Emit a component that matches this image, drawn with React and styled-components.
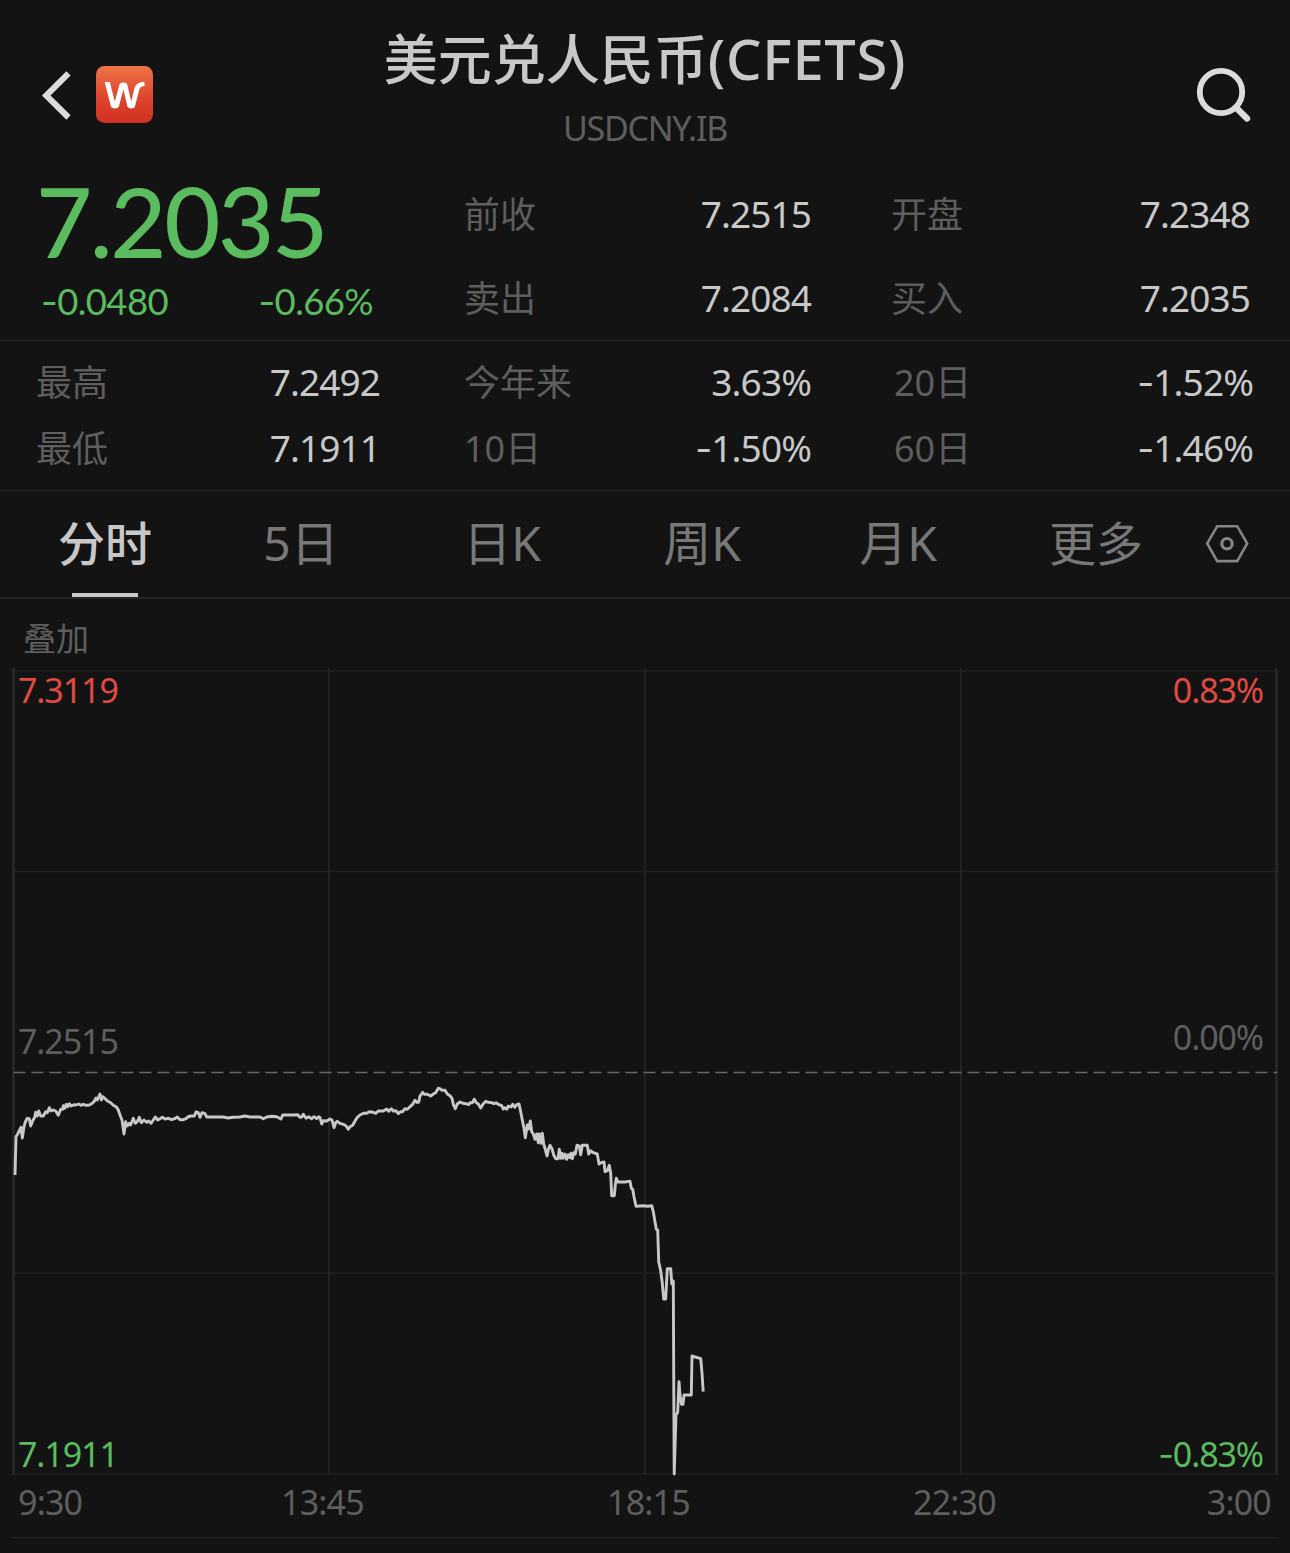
import React from "react";
import styled, { createGlobalStyle } from "styled-components";

const colors = {
  bg: "#131313",
  text: "#c8c8c8",
  bright: "#dcdcdc",
  dim: "#5e5e5e",
  tab: "#787878",
  line: "#242424",
  grid: "#222222",
  up: "#e04a42",
  down: "#5abc5f",
};

const GlobalStyle = createGlobalStyle`
  * { box-sizing: border-box; }
  body {
    margin: 0;
    background: ${colors.bg};
    color: ${colors.text};
    font-family: "Noto Sans", "Noto Sans CJK SC", sans-serif;
  }
`;

const Page = styled.main`
  width: 1290px;
  height: 1553px;
  overflow: hidden;
  background: ${colors.bg};
`;

const Header = styled.header`
  height: 170px;
  display: grid;
  grid-template-columns: 300px 1fr 300px;
`;

const HeaderLeft = styled.div`
  display: flex;
  align-items: flex-start;
  gap: 24px;
  padding: 66px 0 0 40px;
`;

const HeaderRight = styled.div`
  display: flex;
  justify-content: flex-end;
  align-items: flex-start;
  padding: 64px 36px 0 0;
`;

const Titles = styled.div`
  display: flex;
  flex-direction: column;
  align-items: center;
  padding-top: 24px;
  white-space: nowrap;
`;

const Title = styled.h1`
  margin: 0;
  font-size: 54px;
  line-height: 68px;
  font-weight: 500;
`;

const TitleLatin = styled.span`
  font-size: 56px;
  font-weight: 500;
  letter-spacing: 0.7px;
`;

const Subtitle = styled.div`
  margin-top: 11px;
  font-size: 34px;
  line-height: 48px;
  letter-spacing: -1.3px;
  color: ${colors.dim};
`;

const Quote = styled.section`
  height: 171px;
  display: grid;
  grid-template-columns: 464px 427px 1fr;
  border-bottom: 1px solid ${colors.line};
`;

const PriceBlock = styled.div`
  padding: 0 0 0 36px;
  color: ${colors.down};
  font-family: Lato, "Noto Sans", sans-serif;
`;

const Price = styled.div`
  margin-bottom: 5px;
  font-size: 97px;
  line-height: 101px;
  font-weight: 500;
  letter-spacing: -2.4px;
`;

const Changes = styled.div`
  display: flex;
  justify-content: space-between;
  width: 337px;
  padding-left: 5px;
  font-size: 36.5px;
  line-height: 50px;
  letter-spacing: -0.6px;
`;

const Dash = styled.span`
  font-family: Inter, sans-serif;
`;

const Column = styled.div`
  display: flex;
  flex-direction: column;
  padding: ${(p) => p.$pad};
`;

const Field = styled.div`
  display: flex;
  justify-content: space-between;
  height: ${(p) => p.$height}px;
  line-height: ${(p) => p.$height}px;
  white-space: nowrap;
`;

const Label = styled.span`
  padding-top: 1px;
  font-size: 36px;
  color: ${colors.dim};
`;

const Value = styled.span`
  font-size: 37px;
  letter-spacing: -0.9px;
`;

const Stats = styled.section`
  height: 150px;
  display: grid;
  grid-template-columns: 464px 427px 1fr;
  border-bottom: 1px solid ${colors.line};
`;

const Tabs = styled.nav`
  height: 108px;
  display: grid;
  grid-template-columns: 198px 194px 208px 192px 200px 196px 66px;
  padding-left: 6px;
  border-bottom: 2px solid ${colors.line};
`;

const Tab = styled.div`
  display: flex;
  flex-direction: column;
  align-items: center;
  justify-content: space-between;
  font-size: ${(p) => (p.$latin ? 48 : 47)}px;
  line-height: 104px;
  height: 106px;
  font-weight: ${(p) => (p.$active ? 500 : 400)};
  color: ${(p) => (p.$active ? colors.text : colors.tab)};
`;

const TabText = styled.span`
  height: 102px;
`;

const TabBar = styled.span`
  width: 66px;
  height: 4px;
  background: ${colors.text};
`;

const TabSettings = styled.div`
  display: flex;
  align-items: center;
  justify-content: center;
`;

const Overlay = styled.div`
  height: 69px;
  padding: 9px 0 0 23px;
  font-size: 33px;
  line-height: 62px;
  color: ${colors.dim};
`;

const Chart = styled.section`
  position: relative;
  height: 808px;
`;

const ChartSvg = styled.svg`
  display: block;
`;

const ChartLabel = styled.span`
  position: absolute;
  ${(p) => p.$side}: ${(p) => (p.$side === "left" ? 18 : 27)}px;
  top: ${(p) => p.$top}px;
  font-size: 34px;
  line-height: 40px;
  letter-spacing: -1.1px;
  color: ${(p) => p.$color};
`;

const Axis = styled.div`
  height: 62px;
  margin: 0 12px;
  padding: 2px 7px 0 6px;
  display: grid;
  grid-template-columns: 263px 326px 306px 1fr auto;
  font-size: 34px;
  line-height: 48px;
  letter-spacing: -0.8px;
  color: ${colors.dim};
  border-bottom: 1px solid ${colors.line};
`;

const series = [
  "15,1175 16,1136.7 17.7,1134 19.3,1130.7 21,1127.3 22.3,1138 24,1126.7 25.3,1122 27.3,1118.3 29.3,1118.7 30.7,1126 32.7,1120.7 34.7,1117.3 35.7,1112.3 37.3,1116 38.7,1111 40.7,1116 43.3,1116 45.7,1111.7 47.3,1112.7 49.3,1107.7 51,1111 53.3,1110 55.7,1111 58.3,1115.3 60.7,1109.3 62.7,1109.3 63.3,1105.7 64.7,1108.3 66.3,1104.3 67.7,1106.7 69.3,1103.7 71.3,1106 74,1104.7 76,1105 78.7,1104 81,1105.3 83.3,1104.3 86,1105.3 89.3,1105 91.7,1103.7 94,1101.7 96,1098 97.3,1100 100,1094 101.3,1100 102.7,1096.7 105,1098.7 108,1101.3 110.7,1102.7 113.3,1105.3 116,1106.7 118,1109.3 120,1115 122,1120",
  "124,1134 125.7,1121.7 127.3,1126 129.3,1123.3 130.7,1125 133.3,1118.3 135.3,1123.3 137.3,1121.7 139.3,1117.3 141.3,1122.7 144,1120 146.7,1122.3 148.7,1121 151,1123.3 153.3,1120 155.3,1117 157.7,1120 160,1118.7 162.3,1117.3 165,1119 168.3,1118.3 171.7,1119.7 174.7,1118.7 177.3,1117 180,1119.7 183.3,1119.7 186,1118.7 187.7,1117 190.7,1116 194.3,1116 196,1112 198.3,1112.7 200,1117.3 202,1112.7 204.7,1113.3 206.7,1117 223,1117 228.3,1118 233,1117.3 240,1117 245,1116 250,1117 260,1117 263.3,1118.7 266.7,1117 271.7,1116.3 276.7,1116.7 281,1119 282.7,1115 293.3,1115 297.7,1114.7 300,1117.3 301.7,1117 303.3,1114.3 306,1118.3 308.7,1116.7 311.7,1118.7 314,1116.7 316.7,1118.7 318.7,1116.7 320,1117.5",
  "321.7,1124 323.3,1120.7 326.7,1121 330,1119 332,1120 334,1127.7 335.7,1122.7 337.3,1121.3 340,1123.3 343.3,1124.3 346,1125.7 348.3,1129.3 350,1126.7 352.7,1125.3 355,1121 357.3,1117.3 360,1115 363.3,1113.3 366.7,1113.3 369.3,1111.7 373.3,1112.3 375.7,1113.3 378.3,1111 383.3,1111 386.7,1109 388.7,1111.3 391.3,1108.7 393.3,1111 396,1110.7 398.3,1113.7 400.7,1111.7 402.7,1111.7 405,1108.7 407.3,1109.3 410,1106.7 412.7,1104.3 415,1100.3 416.7,1102.3 418.7,1102.3 420,1096 422.7,1092.3 424.3,1094.3 427.3,1094.3 430.7,1096 433.3,1094 435.7,1092.7 438.3,1088.3 440,1088.7 442,1090.3 445,1090.3 447.3,1094 450,1095.7 452,1098.3 453.3,1104.3 455.3,1108.7 457.3,1104 460,1102 462.7,1103.3 466,1103.7 468.7,1104.7 470,1102.7 472.3,1102.7 474.3,1099.3 476,1102.3 478.3,1104 480.7,1108 483.3,1103.7 485.7,1101.3 488.3,1102.3 491.7,1102.7 494,1103.7 496,1102.7 498.3,1104.3 501.7,1105.7 503.3,1109 505,1107.7 506.7,1109.3 508.3,1106 511,1107 512.7,1104.3 514.7,1107.3 516.7,1104.7 519,1104",
  "520,1108.3 521,1113.3 522.3,1120 524,1128.3 525.3,1137.7 527.3,1125 528.7,1129 530.3,1121 531.7,1131.7 533.3,1134 535,1139.3 536.7,1134 538.3,1142.7 539.3,1134 541,1143.3 542.3,1133.3 543.7,1144 545.3,1149.3 547,1156 548.7,1148.3 550,1145.3 552,1148.7 553.7,1155 555.7,1158.7 558,1158.7 559.3,1149.3 560.7,1158.3 562,1153.3 563.3,1158.3 565,1154 566.7,1159.3 568.3,1154.7 570,1157.7 571,1153.3 572.3,1158.7 573.7,1152.7 575.3,1154 577,1145.3 579.3,1146 580.7,1154.7 582.3,1145.3 587.3,1145.3 588.7,1154 590.3,1150.7 593.3,1152.7 597.3,1154 599,1164 601,1162.7 604,1162 605,1171.7 607.3,1170.7 609.3,1165.3 610.7,1173.3 611.7,1195.7 614.3,1195.7 615.3,1185 616.3,1178.3 618,1182 625,1182 630,1181.3 631.3,1188.3 632.7,1189.3 634,1196.7 636,1206.3 643.3,1205.7 647.7,1206.3 651.7,1205.7 653.3,1211.7 655,1221.7 656.3,1229.3 657.7,1230 658.7,1261.7 660.7,1270.7 662.3,1283.3 663.7,1299 665.7,1299 667.3,1268.7 670.7,1268.7 671.8,1284 673.3,1281 674.2,1474 676,1415 677.7,1412.3 679,1381.7 680,1395 681.5,1404.3 683,1404.3 684,1395 691.3,1395 692,1356 700.7,1358.7 702,1373 703.2,1391.7",
].join(" ");

const quoteColumns = [
  { pad: "2px 80px 0 0", rows: [["前收", "7.2515"], ["卖出", "7.2084"]] },
  { pad: "2px 40px 0 0", rows: [["开盘", "7.2348"], ["买入", "7.2035"]] },
];

const statColumns = [
  { pad: "8px 84px 0 36px", rows: [["最高", "7.2492"], ["最低", "7.1911"]] },
  { pad: "8px 80px 0 0", rows: [["今年来", "3.63%"], ["10日", "-1.50%"]] },
  { pad: "8px 37px 0 3px", rows: [["20日", "-1.52%"], ["60日", "-1.46%"]] },
];

const tabs = ["分时", "5日", "日K", "周K", "月K", "更多"];
const times = ["9:30", "13:45", "18:15", "22:30", "3:00"];

function Num({ children }) {
  return children.startsWith("-") ? (
    <>
      <Dash>-</Dash>
      {children.slice(1)}
    </>
  ) : (
    children
  );
}

function FieldColumn({ pad, rows, height }) {
  return (
    <Column $pad={pad}>
      {rows.map(([label, value]) => (
        <Field key={label} $height={height}>
          <Label>{label}</Label>
          <Value>
            <Num>{value}</Num>
          </Value>
        </Field>
      ))}
    </Column>
  );
}

function BackIcon() {
  return (
    <svg width="32" height="57" viewBox="0 0 32 57" fill="none" stroke={colors.bright} strokeWidth="6">
      <path d="M28.5 7.3 6.2 29.5 28.5 51.5" />
    </svg>
  );
}

function BrandLogo() {
  return (
    <svg width="57" height="57" viewBox="0 0 57 57">
      <defs>
        <linearGradient id="brand" x1="0" y1="0" x2="0" y2="1">
          <stop offset="0" stopColor="#ee7447" />
          <stop offset="0.55" stopColor="#de472f" />
          <stop offset="1" stopColor="#d03022" />
        </linearGradient>
      </defs>
      <rect width="57" height="57" rx="8.5" fill="url(#brand)" />
      <path
        d="M8.7 16H13.8L18.8 35.5 23.6 18.2Q24.2 16.4 27.4 16.4T31.2 18.2L35.2 35.5 38.6 21.7Q40.4 16 48.2 15.7L48.8 20Q44.2 20 43.2 24L38.9 40.8Q38.3 42.4 35.2 42.4T31.5 40.8L27.4 23.6 22.8 40.8Q22.1 42.4 18.9 42.4T15 40.8Z"
        fill="#fff"
      />
    </svg>
  );
}

function SearchIcon() {
  return (
    <svg width="60" height="60" viewBox="0 0 60 60" fill="none" stroke={colors.bright}>
      <circle cx="27" cy="28" r="21.2" strokeWidth="5.8" />
      <path d="M42 43.5 53 54.5" strokeWidth="6.4" strokeLinecap="round" />
    </svg>
  );
}

function SettingsIcon() {
  return (
    <svg width="44" height="40" viewBox="0 0 44 40" fill="none" stroke="#858585">
      <path d="M12.2 2.2H32.2L42.2 19.5 32.2 37.1H12.2L2.2 19.5Z" strokeWidth="2.6" />
      <circle cx="22" cy="19.7" r="5.2" strokeWidth="3.2" />
    </svg>
  );
}

function PriceChart() {
  return (
    <ChartSvg width="1290" height="808" viewBox="0 668 1290 808" fill="none">
      <g stroke={colors.grid} strokeWidth="2">
        <path d="M12 671H1278M12 871.5H1278M12 1273H1278M12 1474H1278" strokeWidth="1.7" />
        <path d="M329 668V1474M645 668V1474M961 668V1474" />
        <path d="M13.5 668V1475M1276.5 668V1475" strokeWidth="3" stroke="#252525" />
      </g>
      <path d="M13.5 1072.5H1277" stroke="#686868" strokeWidth="1.4" strokeDasharray="12 6" />
      <polyline points={series} stroke={colors.text} strokeWidth="2.9" strokeLinejoin="round" />
    </ChartSvg>
  );
}

export default function App() {
  return (
    <Page>
      <GlobalStyle />
      <Header>
        <HeaderLeft>
          <BackIcon />
          <BrandLogo />
        </HeaderLeft>
        <Titles>
          <Title>
            美元兑人民币<TitleLatin>(CFETS)</TitleLatin>
          </Title>
          <Subtitle>USDCNY.IB</Subtitle>
        </Titles>
        <HeaderRight>
          <SearchIcon />
        </HeaderRight>
      </Header>

      <Quote>
        <PriceBlock>
          <Price>7.2035</Price>
          <Changes>
            <span><Num>-0.0480</Num></span>
            <span><Num>-0.66%</Num></span>
          </Changes>
        </PriceBlock>
        {quoteColumns.map((c) => (
          <FieldColumn key={c.rows[0][0]} {...c} height={84} />
        ))}
      </Quote>

      <Stats>
        {statColumns.map((c) => (
          <FieldColumn key={c.rows[0][0]} {...c} height={66} />
        ))}
      </Stats>

      <Tabs>
        {tabs.map((name, i) => (
          <Tab key={name} $active={i === 0} $latin={/[0-9K]/.test(name)}>
            <TabText>{name}</TabText>
            {i === 0 && <TabBar />}
          </Tab>
        ))}
        <TabSettings>
          <SettingsIcon />
        </TabSettings>
      </Tabs>

      <Overlay>叠加</Overlay>

      <Chart>
        <PriceChart />
        <ChartLabel $side="left" $top={2} $color={colors.up}>7.3119</ChartLabel>
        <ChartLabel $side="right" $top={2} $color={colors.up}>0.83%</ChartLabel>
        <ChartLabel $side="left" $top={353} $color={colors.dim}>7.2515</ChartLabel>
        <ChartLabel $side="right" $top={349} $color={colors.dim}>0.00%</ChartLabel>
        <ChartLabel $side="left" $top={766} $color={colors.down}>7.1911</ChartLabel>
        <ChartLabel $side="right" $top={766} $color={colors.down}>
          <Num>-0.83%</Num>
        </ChartLabel>
      </Chart>

      <Axis>
        {times.map((t) => (
          <span key={t}>{t}</span>
        ))}
      </Axis>
    </Page>
  );
}
